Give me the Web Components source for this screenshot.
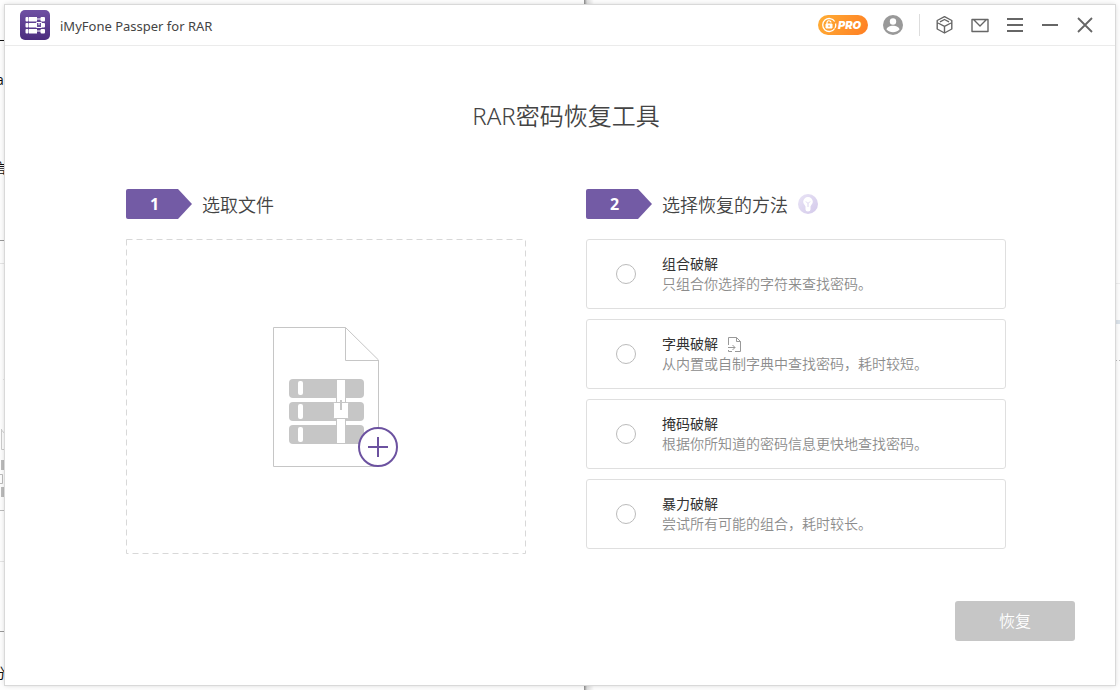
<!DOCTYPE html>
<html lang="zh-CN">
<head>
<meta charset="utf-8">
<title>iMyFone Passper for RAR</title>
<style>
  html, body { height: 100%; margin: 0; }
  body {
    font-family: "Open Sans", "Noto Sans CJK SC", sans-serif;
    font-size: 14px;
    line-height: 20px;
    color: #444;
    background: #fdfdfd;
    overflow: hidden;
    --purple: #735ba5;
    --line: #dfdfdf;
    --grey: #c6c6c6;
    --muted: #8c8c8c;
  }
</style>
</head>
<body>
<passper-app></passper-app>

<script>
function define(name, html) {
  const template = document.createElement('template');
  template.innerHTML = html;
  customElements.define(name, class extends HTMLElement {
    constructor() {
      super();
      this.attachShadow({ mode: 'open' }).append(template.content.cloneNode(true));
    }
    connectedCallback() {
      for (const el of this.shadowRoot.querySelectorAll('[data-attr]')) {
        const value = this.getAttribute(el.dataset.attr);
        if (value !== null) el.textContent = value;
      }
      const labelled = this.shadowRoot.querySelector('[data-label]');
      if (labelled) labelled.setAttribute('aria-label', this.getAttribute('label') || '');
    }
  });
}

/* Edges of the desktop that show round the window */
define('desktop-edges', `
  <style>
    :host { position: absolute; inset: 0; overflow: hidden; color: #111; }
    svg { position: absolute; top: 0; left: 0; }
    .right { left: auto; right: 0; }
    span { position: absolute; left: -8px; font-size: 14px; line-height: 20px; }
    .latin { left: -4px; }
    .seam { position: absolute; left: 584px; top: 0; bottom: 0; width: 10px;
            background: linear-gradient(90deg, #888, #ddd 30%, #fdfdfd); }
  </style>
  <div class="seam"></div>
  <span class="latin" style="top:70px">a</span>
  <span style="top:158px">信</span>
  <span style="top:663px">分</span>
  <svg width="6" height="690" aria-hidden="true">
    <path d="M0 40.500H6" stroke="#111"/>
    <path d="M0 240.500H6M0 631.500H6" stroke="#999"/>
    <path d="M0 510.500H6" stroke="#bbb"/>
    <path d="M0 263.500H6M3 379.500H6M0 561.500H6" stroke="#e5e5e5"/>
    <path d="M1.500 429V449.500H5M1.500 430L6 435" fill="none" stroke="#ccc"/>
    <path d="M1 460H6V470H1ZM4 473H6V483H4ZM1 487H6V497H1Z" fill="#bbb"/>
    <path d="M0 474.500H2.500V483.500H0" fill="none" stroke="#bbb"/>
  </svg>
  <svg class="right" width="5" height="690" aria-hidden="true">
    <path d="M0 322H5" stroke="#dbe3ea" stroke-width="4"/>
    <path d="M0 360.500H2M4 360.500H5" stroke="#bbb"/>
    <path d="M0 283.500H5" stroke="#eee"/>
  </svg>`);

define('icon-button', `
  <style>
    :host { display: block; width: 20px; height: 20px; color: #666; }
    button { display: block; width: 100%; height: 100%; padding: 0; border: 0; background: none; color: inherit; }
    ::slotted(svg) { display: block; }
  </style>
  <button type="button" data-label><slot></slot></button>`);

define('pro-badge', `
  <style>
    :host { display: block; }
    button {
      display: flex; align-items: center; gap: 1px; width: 50px; height: 20px; padding: 0 3px; border: 0;
      border-radius: 10px; color: #fff; background: linear-gradient(120deg, #ffae35, #ff7e23);
      font: italic 900 11px/20px Inter, sans-serif;
    }
    svg { flex: none; }
  </style>
  <button type="button">
    <svg width="16" height="16" viewBox="0 0 16 16" fill="none" stroke="#fff" aria-hidden="true">
      <path d="M13.700 4.500A6.500 6.500 0 1 0 13.700 11.500" stroke-width="1.300"/>
      <path d="M14.600 6.500A6.500 6.500 0 0 1 14 11" stroke-width="1.300"/>
      <path d="M6 7V6a2 2 0 0 1 4-.5" stroke-width="1.200"/>
      <path d="M5 7h6v4H5z" fill="#fff"/>
      <path d="M8 8v2" stroke="#ff9a2d"/>
    </svg>PRO
  </button>`);

define('title-bar', `
  <style>
    :host { display: flex; align-items: center; height: 40px; padding: 0 20px 0 15px; border-bottom: 1px solid #ebebeb; }
    .name { flex: 1; margin: 0 10px; font: 13px/20px "Noto Sans", sans-serif; padding-top: 2px; color: #444; }
    .tools { display: flex; align-items: center; gap: 15px; }
    .bar { width: 1px; height: 22px; margin-left: 1px; background: #ddd; }
  </style>
  <svg width="30" height="30" viewBox="0 0 30 30" aria-hidden="true">
    <defs><linearGradient id="g" x2="0" y2="1"><stop stop-color="#6f50a3"/><stop offset="1" stop-color="#4b2c7e"/></linearGradient></defs>
    <rect width="30" height="30" rx="5" fill="url(#g)"/>
    <g fill="#fff">
      <rect x="5.500" y="7" width="3" height="4.500" rx="1"/><rect x="9" y="7" width="8" height="4.500"/><rect x="20.500" y="7" width="4.500" height="4.500" rx="1"/>
      <rect x="5.500" y="13" width="3" height="4.500" rx="1"/><rect x="9" y="13" width="8" height="4.500"/><rect x="20.500" y="13" width="4.500" height="4.500" rx="1"/>
      <rect x="5.500" y="19" width="3" height="4.500" rx="1"/><rect x="9" y="19" width="8" height="4.500"/><rect x="20.500" y="19" width="4.500" height="4.500" rx="1"/>
      <path d="M16 8.500h6v1h-6zM16 20.500h6v1h-6z"/>
    </g>
    <path d="M16.500 12.500h5v5h-5zM19 12v3" fill="#6b509b" stroke="#fff"/>
  </svg>
  <span class="name">iMyFone Passper for RAR</span>
  <div class="tools">
    <pro-badge></pro-badge>
    <icon-button label="账户"><svg width="20" height="20" viewBox="0 0 20 20"><circle cx="10" cy="10" r="10" fill="#999"/><circle cx="10" cy="6.500" r="3.200" fill="#fff"/><path d="M3.500 14.500C4 12 7 10.800 10 10.800s6 1.200 6.500 3.700C14.500 16.500 12.500 17.200 10 17.200s-4.500-.7-6.500-2.700z" fill="#fff"/></svg></icon-button>
    <span class="bar"></span>
    <icon-button label="产品"><svg width="20" height="20" viewBox="0 0 20 20" fill="none" stroke="currentColor" stroke-width="1.400" stroke-linejoin="round"><path d="M9.500 1.700L16.800 5.500V14L9.500 18 2.200 14V5.500ZM3 8L9.500 11.300 16 8M9.500 11.300V17.500M5 6.800L9.500 4.500 14 6.800"/></svg></icon-button>
    <icon-button label="邮件"><svg width="20" height="20" viewBox="0 0 20 20" fill="none" stroke="currentColor" stroke-width="1.400" stroke-linejoin="round"><path d="M2 4.500H18V16.500H2ZM3.500 4.500L10 11 16.500 4.500"/></svg></icon-button>
    <icon-button label="菜单"><svg width="20" height="20" viewBox="0 0 20 20" fill="none" stroke="currentColor" stroke-width="2"><path d="M2 4H18M2 10H18M2 16H18"/></svg></icon-button>
    <icon-button label="最小化"><svg width="20" height="20" viewBox="0 0 20 20" fill="none" stroke="currentColor" stroke-width="2"><path d="M2 10H18"/></svg></icon-button>
    <icon-button label="关闭"><svg width="20" height="20" viewBox="0 0 20 20" fill="none" stroke="currentColor" stroke-width="1.800"><path d="M3 3L17 17M17 3L3 17"/></svg></icon-button>
  </div>`);

define('step-heading', `
  <style>
    :host { display: flex; align-items: center; gap: 10px; height: 30px; margin-bottom: 20px; }
    .tag { box-sizing: border-box; width: 66px; height: 30px; padding-right: 9px; text-align: center; color: #fff;
           background: var(--purple); border-radius: 2px; font-size: 16px; font-weight: 700; line-height: 30px;
           clip-path: polygon(0 0, 52px 0, 100% 50%, 52px 100%, 0 100%); }
    h2 { margin: 0; padding-top: 2px; font-size: 18px; line-height: 28px; font-weight: 350; color: #444; }
  </style>
  <span class="tag" data-attr="number"></span><h2><slot></slot></h2><slot name="hint"></slot>`);

define('file-picker', `
  <style>
    :host { display: block; }
    button { position: relative; display: flex; align-items: center; justify-content: center; width: 100%; height: 315px; padding: 0; border: 0; background: none; }
    .frame { position: absolute; inset: 0; width: 100%; height: 100%; }
    .frame rect { width: calc(100% - 1px); height: calc(100% - 1px); }
    .file { overflow: visible; }
  </style>
  <button type="button" aria-label="选取文件">
    <svg class="frame" aria-hidden="true"><rect x="0.500" y="0.500" fill="none" stroke="#d8d8d8" stroke-dasharray="6 4"/></svg>
    <svg class="file" width="106" height="140" viewBox="0 0 106 140" fill="none" stroke="#c6c6c6" aria-hidden="true">
      <path d="M72.500 .500H.500V139.500H105.500V33L72.500 .500V33.500H105.500"/>
      <g fill="#c6c6c6" stroke="none">
        <rect x="16" y="52" width="75" height="19" rx="4"/><rect x="16" y="75" width="75" height="19" rx="4"/><rect x="16" y="98" width="75" height="19" rx="4"/>
      </g>
      <g fill="#fff" stroke="none">
        <rect x="25" y="54" width="5" height="14" rx="2"/><rect x="25" y="77" width="5" height="15" rx="2"/><rect x="25" y="100" width="5" height="15" rx="2"/>
      </g>
      <g fill="#fff">
        <rect x="63.500" y="52.500" width="9" height="64"/><rect x="60.500" y="75.500" width="15" height="16" rx="1"/>
      </g>
      <path d="M68 73V83" stroke-width="2"/>
      <g stroke="#6c52a0" stroke-width="2"><circle cx="105" cy="120" r="19" fill="#fff"/><path d="M95 120H115M105 110V130"/></g>
    </svg>
  </button>`);

define('method-option', `
  <style>
    :host { display: block; }
    label { box-sizing: border-box; display: flex; align-items: center; gap: 26px; height: 70px; padding: 0 29px;
            border: 1px solid var(--line); border-radius: 3px; }
    input { flex: none; appearance: none; width: 20px; height: 20px; margin: 0; border: 1px solid #bbb; border-radius: 50%; background: #fff; }
    input:checked { border: 6px solid var(--purple); }
    .title { display: flex; align-items: center; gap: 10px; color: #333; }
    .text { display: block; }
    .desc { display: block; color: var(--muted); font-weight: 350; }
  </style>
  <label><input type="radio" name="method"><span class="text"><span class="title"><span data-attr="heading"></span><slot name="icon"></slot></span><span class="desc"><slot></slot></span></span></label>`);

define('primary-button', `
  <style>
    :host { display: block; }
    button { width: 120px; height: 40px; padding: 0; border: 0; border-radius: 3px; color: #fff; background: var(--grey);
             font: 350 16px/40px "Open Sans", "Noto Sans CJK SC", sans-serif; }
  </style>
  <button type="button"><slot></slot></button>`);

define('passper-app', `
  <style>
    :host { position: relative; display: flex; box-sizing: border-box; min-height: 100vh; padding: 5px; }
    .window { position: relative; flex: 1; display: flex; flex-direction: column; background: #fff;
              box-shadow: 0 0 0 1px #d9d9d9, 0 0 5px rgba(0,0,0,.2); }
    main { flex: 1; display: flex; flex-direction: column; }
    .content { padding: 0 109px 0 121px; }
    h1 { margin: 52px 0 55px; font: 350 24px/36px "Noto Sans", "Noto Sans CJK SC", sans-serif; text-align: center; color: #444; }
    .steps { display: grid; grid-template-columns: 400fr 420fr; gap: 60px; }
    .methods { display: grid; gap: 10px; }
    footer { display: flex; justify-content: flex-end; margin-top: auto; padding: 0 40px 44px; }
    svg { display: block; }
  </style>
  <desktop-edges></desktop-edges>
  <div class="window">
    <title-bar></title-bar>
    <main>
      <div class="content">
        <h1>RAR密码恢复工具</h1>
        <div class="steps">
          <section>
            <step-heading number="1">选取文件</step-heading>
            <file-picker></file-picker>
          </section>
          <section>
            <step-heading number="2">选择恢复的方法
              <svg slot="hint" width="20" height="20" viewBox="0 0 20 20" aria-hidden="true">
                <defs><linearGradient id="b" x2="1" y2="1"><stop stop-color="#e9e4f6"/><stop offset="1" stop-color="#d3c9ea"/></linearGradient></defs>
                <circle cx="10" cy="10" r="10" fill="url(#b)"/>
                <path d="M7.500 12.500C7 11 5.200 10 5.200 7.800a4.800 4.800 0 0 1 9.600 0C14.800 10 13 11 12.500 12.500V15.500Q12.500 17.500 10 17.500T7.500 15.500Z" fill="#fff"/>
                <path d="M8 7.500L10 9.500 12 7.500M10 9.500V13" fill="none" stroke="#dcd4ef"/>
              </svg>
            </step-heading>
            <div class="methods">
              <method-option heading="组合破解">只组合你选择的字符来查找密码。</method-option>
              <method-option heading="字典破解">从内置或自制字典中查找密码，耗时较短。
                <svg slot="icon" width="13" height="15" viewBox="0 0 13 15" fill="none" stroke="#999" aria-hidden="true"><path d="M.5 8V.500H8.500L12.500 4.500V14.500H7M8.500 .500V4.500H12.500M0 10.500H7M4.500 8L7 10.500 4.500 13M.5 13V14.500H4"/></svg>
              </method-option>
              <method-option heading="掩码破解">根据你所知道的密码信息更快地查找密码。</method-option>
              <method-option heading="暴力破解">尝试所有可能的组合，耗时较长。</method-option>
            </div>
          </section>
        </div>
      </div>
      <footer><primary-button>恢复</primary-button></footer>
    </main>
  </div>`);

/* One choice at a time across the option elements */
const app = document.querySelector('passper-app').shadowRoot;
const options = [...app.querySelectorAll('method-option')];
options.forEach(option => option.shadowRoot.querySelector('input').addEventListener('change', () => {
  options.filter(other => other !== option).forEach(other => { other.shadowRoot.querySelector('input').checked = false; });
}));
</script>
</body>
</html>
